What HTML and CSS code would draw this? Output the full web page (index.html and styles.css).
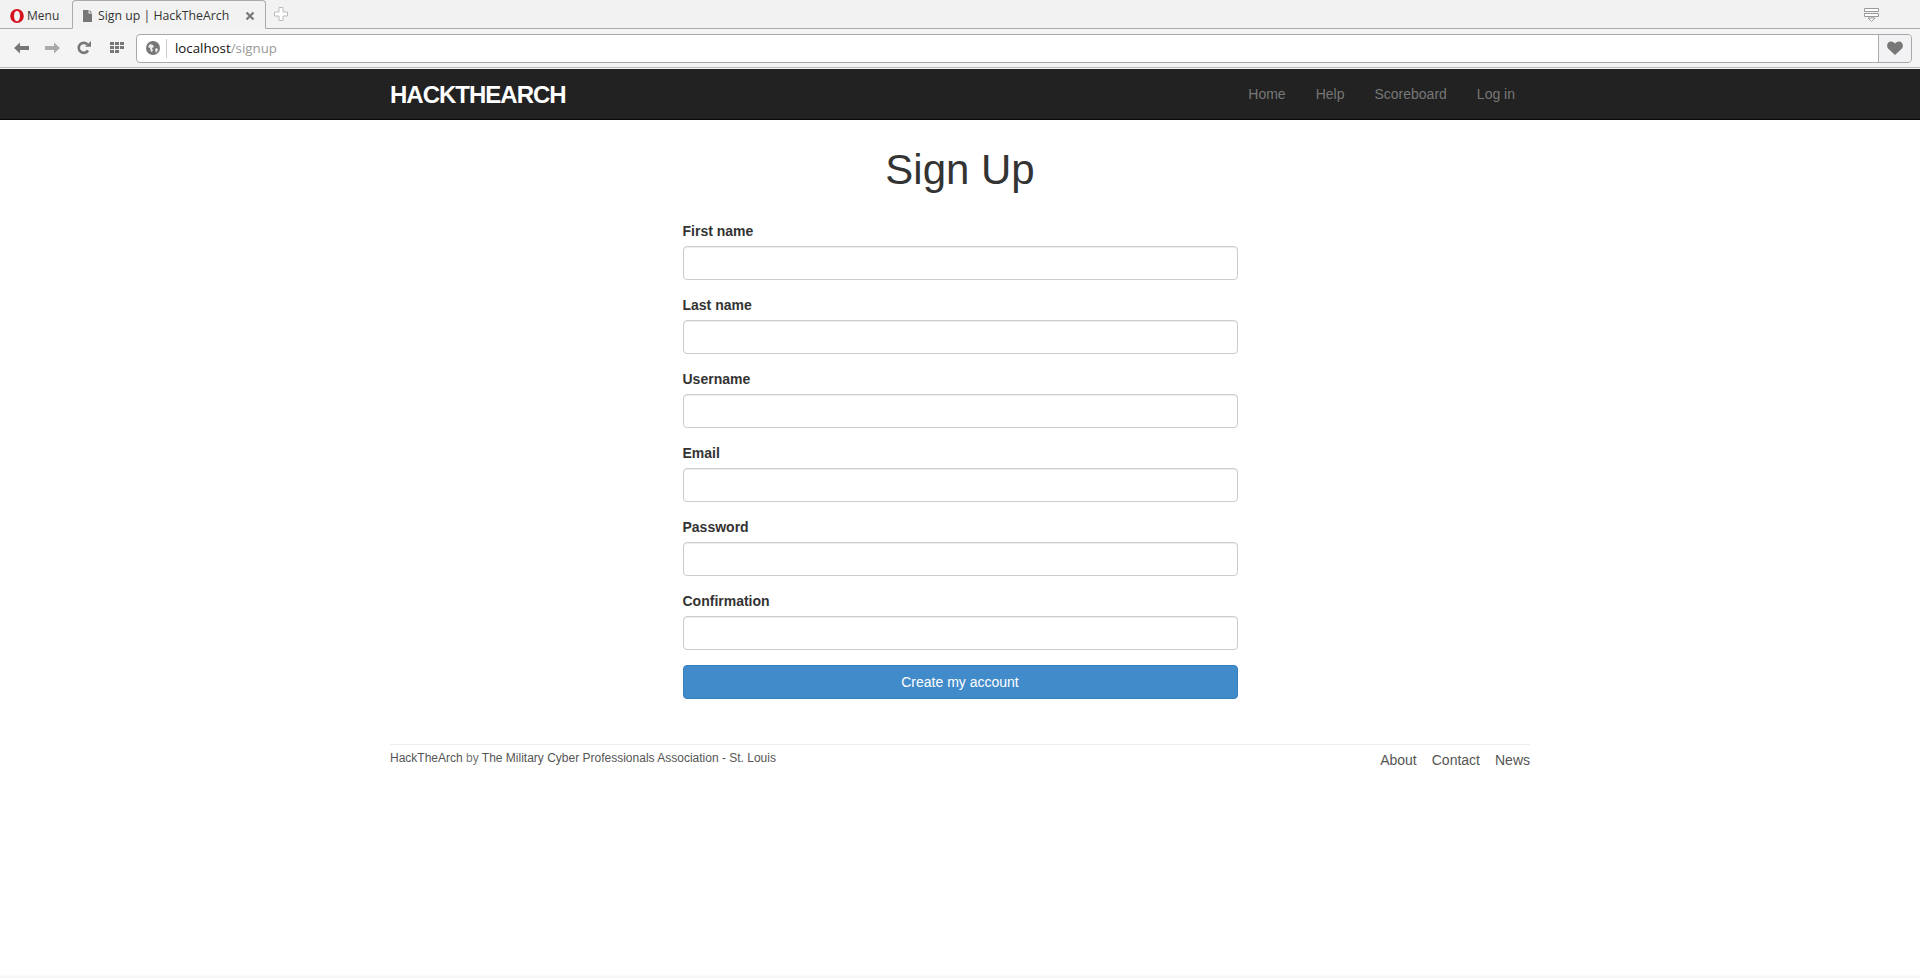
FILE: index.html
```html
<!DOCTYPE html>
<html lang="en">
<head>
<meta charset="utf-8">
<title>Sign up | HackTheArch</title>
<link rel="stylesheet" href="styles.css">
</head>
<body>
<div class="browser">
  <div class="tabbar">
    <div class="menu">
      <svg class="opera" width="16" height="16" viewBox="0 0 16 16"><ellipse cx="8" cy="8" rx="6.800" ry="7" fill="#d5101f"/><ellipse cx="8" cy="8" rx="3" ry="5.200" fill="#f2f2f2"/></svg>
      <span>Menu</span>
    </div>
    <div class="tab">
      <svg width="11" height="12" viewBox="0 0 11 12"><path d="M1 0h5.500v3.500H10V12H1zM7.500 0L10 2.500H7.500z" fill="#777"/></svg>
      <span class="tab-title">Sign up | HackTheArch</span>
      <svg class="tab-close" width="10" height="10" viewBox="0 0 10 10"><path d="M1.500 1.500l7 7M8.500 1.500l-7 7" stroke="#777" stroke-width="2.200"/></svg>
    </div>
    <svg class="newtab" width="14" height="14" viewBox="0 0 14 14"><path d="M5 .5h4v4.500h4.500v4H9v4.500H5V9H.5V5H5z" fill="#fff" stroke="#bbb"/></svg>
    <svg class="tabmenu" width="15" height="15" viewBox="0 0 15 15"><path d="M.5.500h14v3H.5zM.5 5.500h14v3H.5z" fill="#fff" stroke="#999"/><path d="M4 10h7l-3.500 3.500z" fill="#fff" stroke="#999"/></svg>
  </div>
  <div class="toolbar">
    <svg class="tool back" width="15" height="12" viewBox="0 0 15 12"><path d="M0 6l6-5.500V4h9v4H6v3.500z" fill="#777"/></svg>
    <svg class="tool fwd" width="15" height="12" viewBox="0 0 15 12"><path d="M15 6L9 .5V4H0v4h9v3.500z" fill="#aaa"/></svg>
    <svg class="tool reload" width="14" height="14" viewBox="0 0 14 14"><path d="M11 9.500A5 5 0 1 1 10.500 3.500" fill="none" stroke="#777" stroke-width="2.600"/><path d="M8 5.800h6V0z" fill="#777"/></svg>
    <svg class="tool grid" width="14" height="12" viewBox="0 0 14 12"><path d="M0 0h4v3H0zM5 0h4v3H5zM10 0h4v3h-4zM0 4h4v3H0zM5 4h4v3H5zM10 4h4v3h-4zM0 8h4v3H0zM5 8h4v3H5z" fill="#777"/></svg>
    <div class="address">
      <span class="globe-wrap">
        <svg width="14" height="14" viewBox="0 0 14 14"><circle cx="7" cy="7" r="7" fill="#777"/><path d="M4 3l3 1 1 2-2 1 1 3-2 1-1-4-2-1zM9 8l2-1 1 2-2 3z" fill="#eee"/></svg>
      </span>
      <span class="url"><span class="host">localhost</span>/signup</span>
      <span class="heart">
        <svg width="16" height="14" viewBox="0 0 16 14"><path d="M8 14L1 7.500C-1 5 .5 .5 4 .5c2 0 3.200 1 4 2.200C8.800 1.500 10 .5 12 .5c3.500 0 5 4.500 3 7z" fill="#777"/></svg>
      </span>
    </div>
  </div>
</div>
<nav class="navbar">
  <div class="container navbar-inner">
    <a class="brand" href="#">HACKTHEARCH</a>
    <ul class="nav">
      <li><a href="#">Home</a></li>
      <li><a href="#">Help</a></li>
      <li><a href="#">Scoreboard</a></li>
      <li><a href="#">Log in</a></li>
    </ul>
  </div>
</nav>
<main class="container">
  <h1>Sign Up</h1>
  <form class="signup">
    <label>First name</label>
    <input type="text">
    <label>Last name</label>
    <input type="text">
    <label>Username</label>
    <input type="text">
    <label>Email</label>
    <input type="email">
    <label>Password</label>
    <input type="password">
    <label>Confirmation</label>
    <input type="password">
    <button type="button">Create my account</button>
  </form>
  <footer class="footer">
    <small><a href="#">HackTheArch</a> by <a href="#">The Military Cyber Professionals Association - St. Louis</a></small>
    <ul class="footer-links">
      <li><a href="#">About</a></li>
      <li><a href="#">Contact</a></li>
      <li><a href="#">News</a></li>
    </ul>
  </footer>
</main>
<div class="bottom-shade"></div>
</body>
</html>
```
FILE: styles.css
```css
* { box-sizing: border-box; }
html, body { height: 100%; }
body {
  margin: 0;
  font-family: "Liberation Sans", Arial, sans-serif;
  font-size: 14px;
  line-height: 20px;
  color: #333;
  background: #fff;
  overflow: hidden;
}
a { text-decoration: none; color: inherit; }
ul { list-style: none; margin: 0; padding: 0; }

.browser { height: 69px; background: #f2f2f2; font-family: "Open Sans", sans-serif; font-size: 12px; }
.tabbar {
  height: 29px;
  display: flex;
  align-items: flex-end;
  border-bottom: 1px solid #aaa;
  padding-left: 9px;
  background: #f2f2f2;
}
.menu { width: 63px; height: 28px; display: flex; align-items: center; gap: 2px; color: #333; padding-top: 4px; }
.opera { flex: none; }
.tab {
  width: 194px;
  height: 29px;
  margin-bottom: -1px;
  background: #f2f2f2;
  border: 1px solid #aaa;
  border-bottom-color: #f2f2f2;
  border-radius: 4px 4px 0 0;
  display: flex;
  align-items: center;
  padding-left: 9px;
  padding-top: 2px;
  color: #333;
}
.tab-title { margin-left: 5px; flex: 1; white-space: nowrap; font-size: 12.3px; }
.tab-close { margin-right: 10px; }
.newtab { margin: 0 0 7px 8px; }
.tabmenu { margin: 0 41px 5px auto; }
.toolbar { height: 39px; display: flex; align-items: center; background: #f4f4f4; padding: 0 8px 0 14px; border-bottom: 1px solid #bbb; }
.tool { flex: none; }
.fwd { margin-left: 16px; }
.reload { margin-left: 17px; }
.grid { margin-left: 19px; }
.address {
  flex: 1;
  height: 29px;
  margin-left: 12px;
  background: #fff;
  border: 1px solid #a8a8a8;
  border-radius: 4px;
  display: flex;
  align-items: center;
  font-size: 13.3px;
  color: #999;
}
.globe-wrap { width: 30px; height: 19px; border-right: 1px solid #ccc; display: flex; align-items: center; justify-content: center; padding-left: 3px; }
.url { flex: 1; padding-left: 8px; }
.host { color: #111; }
.heart { width: 33px; height: 27px; background: #f2f2f4; border-left: 1px solid #aaa; border-radius: 0 4px 4px 0; display: flex; align-items: center; justify-content: center; }

.container { width: 1170px; margin: 0 auto; padding: 0 15px; }
.navbar { height: 51px; background: #222; border-bottom: 1px solid #080808; }
.navbar-inner { display: flex; justify-content: space-between; height: 50px; }
.brand {
  color: #fff;
  font-size: 24px;
  font-weight: bold;
  letter-spacing: -1px;
  line-height: 51px;
}
.nav { display: flex; }
.nav a { display: block; padding: 15px; color: #777; }

h1 {
  margin: 0;
  padding-top: 27px;
  height: 97px;
  font-size: 42px;
  line-height: 46px;
  font-weight: 500;
  text-align: center;
  color: #333;
}
.signup { width: 555px; margin: 0 auto; display: flex; flex-direction: column; padding-top: 4px; }
.signup label { font-weight: bold; height: 20px; margin-bottom: 5px; }
.signup input {
  height: 34px;
  margin-bottom: 15px;
  border: 1px solid #ccc;
  border-radius: 4px;
  background: #fff;
  box-shadow: inset 0 1px 1px rgba(0,0,0,.075);
  padding: 6px 12px;
  font: inherit;
}
.signup button {
  height: 34px;
  background: #428bca;
  border: 1px solid #357ebd;
  border-radius: 4px;
  color: #fff;
  font: inherit;
  text-align: center;
}
.footer {
  margin-top: 45px;
  border-top: 1px solid #eee;
  display: flex;
  justify-content: space-between;
  color: #777;
}
.footer small { font-size: 12px; line-height: 17px; margin-top: 5px; }
.footer small a { color: #555; }
.footer-links { display: flex; gap: 15px; margin-top: 5px; }
.footer-links a { color: #555; }
.bottom-shade {
  position: fixed;
  left: 0; right: 0; bottom: 0;
  height: 4px;
  background: linear-gradient(#fff, #f4f4f4);
}
```
